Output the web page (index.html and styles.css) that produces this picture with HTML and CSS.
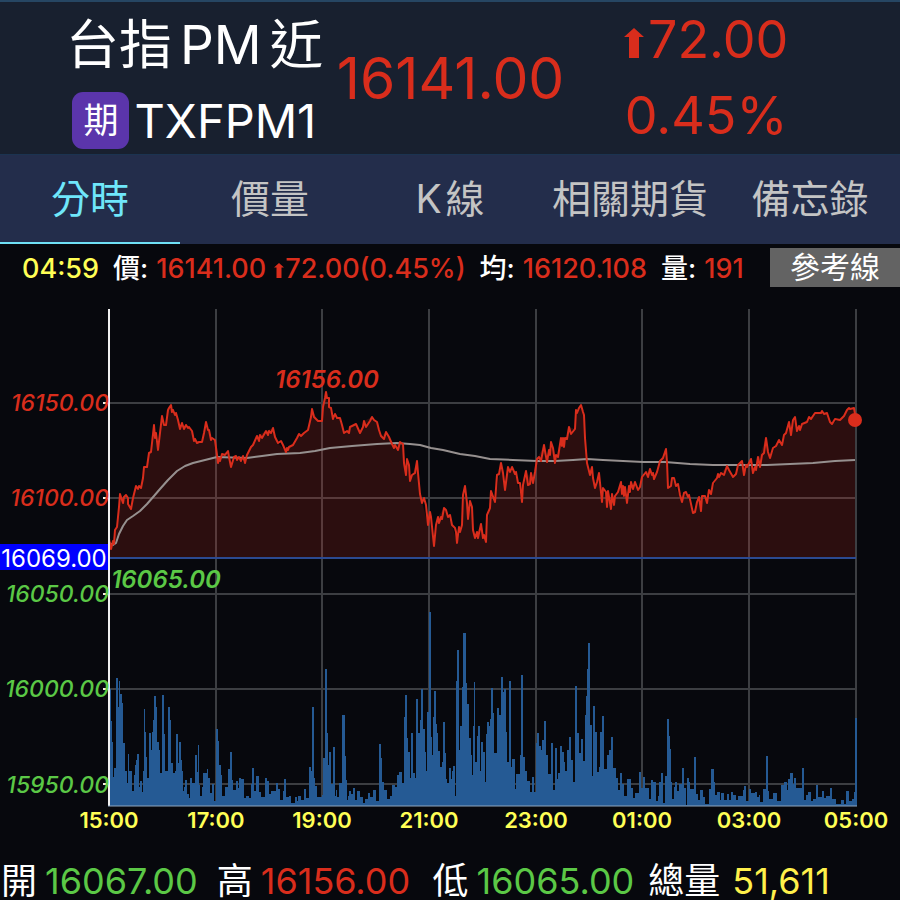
FILE: index.html
```html
<!DOCTYPE html>
<html lang="zh-Hant">
<head>
    <meta charset="UTF-8">
    <meta name="viewport" content="width=device-width, initial-scale=1.0">
    <title>台指PM近 TXFPM1</title>
    <link rel="stylesheet" href="styles.css">
</head>
<body>

<header class="quote">
    <div class="quote-name">
        <h1>台指<span class="latin">PM</span>近</h1>
        <div class="symbol"><span class="badge">期</span><span>TXFPM1</span></div>
    </div>
    <div class="quote-price up">16141.00</div>
    <div class="quote-change up">
        <div><svg class="arrow" viewBox="0 0 20 30"><path d="M10 0L20 9H15V30H5V9H0Z"/></svg>72.00</div>
        <div>0.45%</div>
    </div>
</header>

<nav class="tabs">
    <a href="#time" class="active">分時</a>
    <a href="#volume">價量</a>
    <a href="#kline"><span class="k">K</span>線</a>
    <a href="#related">相關期貨</a>
    <a href="#memo">備忘錄</a>
</nav>

<main>
    <div class="info">
        <span class="time">04:59</span>
        <span class="item"><span>價:</span><span class="up">16141.00</span><span class="up"><svg class="arrow" viewBox="0 0 20 30"><path d="M10 0L20 9H15V30H5V9H0Z"/></svg>72.00(0.45%)</span></span>
        <span class="item"><span>均:</span><span class="up">16120.108</span></span>
        <span class="item"><span>量:</span><span class="up">191</span></span>
        <button type="button">參考線</button>
    </div>

    <svg class="chart" viewBox="0 290 900 560">
        <!-- Grid -->
        <path class="grid" d="M216 309V806M322 309V806M429 309V806M536 309V806M642 309V806M749 309V806M856 309V806
            M109 403H856M109 498H856M109 594H856M109 689H856M109 784H856"/>

        <!-- Volume bars -->
        <path class="volume" d="M109 806V689H111V721H112V742H113V777H114V768H116V678H118V707H119V681H120V694H122V703H123V743H125V771H127V783H128V754H129V771H132V791H134V775H135V765H136V760H137V754H139V787H140V781H142V792H143V771H144V709H145V732H146V757H147V778H149V733H151V750H152V732H153V720H154V696H156V707H157V742H159V750H160V773H162V695H164V734H165V771H168V707H170V720H171V763H173V773H175V771H176V734H178V763H179V742H181V760H182V771H183V791H184V787H185V780H187V794H189V798H190V778H192V783H195V755H197V772H198V745H199V785H200V796H202V787H203V773H207V769H208V778H210V793H212V784H214V801H216V729H218V741H219V765H221V775H222V796H225V787H228V769H230V752H232V780H233V790H236V781H238V788H239V778H241V779H244V798H246V796H249V798H251V784H252V768H254V791H256V776H259V792H261V797H265V778H267V781H269V794H271V791H276V783H278V789H280V800H283V791H284V779H286V797H289V796H291V803H295V797H297V801H298V796H301V800H304V789H306V798H309V767H311V771H312V707H314V778H315V786H317V797H322V795H323V758H325V669H327V733H328V765H329V752H331V784H333V747H335V796H336V790H337V797H339V783H342V715H345V756H346V780H347V800H348V796H349V791H351V794H353V788H355V800H357V791H360V797H363V803H365V799H368V793H370V797H373V790H376V801H379V744H381V758H382V782H384V790H387V799H390V796H392V785H395V787H397V775H399V772H402V783H404V717H405V695H407V738H408V752H410V778H411V733H413V773H415V778H416V699H418V733H420V720H421V689H423V729H425V752H426V771H427V712H429V612H431V737H432V755H433V717H434V691H436V724H437V733H438V751H440V767H442V762H443V722H445V753H446V779H447V783H449V768H451V779H452V771H453V766H455V796H456V681H457V650H459V750H460V726H462V687H463V633H466V683H467V704H469V738H471V755H472V775H473V726H474V682H475V762H477V736H478V726H480V771H481V742H483V752H485V782H486V734H487V722H489V726H490V719H491V688H493V713H494V753H497V708H499V715H501V677H503V692H504V689H506V732H507V762H509V681H511V767H512V759H515V789H516V774H520V755H521V675H523V757H525V771H527V781H530V792H532V777H534V792H536V743H537V733H539V746H541V750H542V740H544V721H546V755H548V774H551V743H553V790H555V748H557V779H558V773H560V746H562V752H564V762H565V771H567V750H569V737H571V760H573V782H575V686H577V733H579V753H581V739H583V761H585V715H586V696H587V669H588V643H590V725H592V776H593V706H595V732H597V772H599V767H600V732H602V716H604V769H607V755H609V750H611V737H613V768H616V778H618V790H620V773H622V784H624V796H627V779H631V788H633V798H635V793H639V772H641V788H643V777H645V788H649V799H651V780H653V782H656V801H658V796H659V782H661V773H663V803H665V776H667V719H669V736H670V749H671V782H672V799H674V787H675V782H677V791H679V784H682V768H684V788H686V805H687V778H689V782H690V789H694V757H696V794H698V800H700V790H703V797H705V804H709V789H711V769H714V782H715V795H717V792H720V800H721V793H724V800H727V794H729V800H731V792H733V795H736V800H738V796H743V790H744V786H746V801H749V789H751V793H755V792H757V797H759V795H760V802H763V789H766V756H768V791H769V799H773V793H777V801H781V785H784V782H787V790H788V779H790V773H793V784H794V778H796V788H802V768H804V800H806V795H808V792H811V801H813V799H816V785H818V797H822V791H824V798H826V796H830V788H832V799H836V804H841V800H844V804H846V791H849V801H852V799H854V792H855V718H857V806Z"/>

        <!-- Price area, price line and average line -->
        <path class="area" d="M109 539L111 549 113 541 115 530 117 527 119 507 120 494 123 503 126 495 128 504 131 509 133 498 136 486 138 489 141 488 143 478 144 467 147 467 149 453 151 452 154 425 155 438 158 450 160 433 162 416 164 425 166 425 168 410 171 405 173 412 176 413 178 420 180 429 182 423 184 429 186 425 192 431 194 441 197 443 202 442 206 422 211 440 215 440 218 463 222 454 228 451 231 467 234 457 245 463 251 447 257 436 266 431 273 428 278 443 286 452 297 438 308 430 312 409 318 421 322 421 326 392 329 407 333 419 340 418 344 433 356 424 360 433 364 421 372 417 377 422 381 436 386 432 394 448 400 442 403 444 406 475 407 459 410 481 417 461 420 494 428 525 430 512 434 546 438 517 444 508 452 525 457 543 462 525 465 486 468 519 470 501 475 538 481 524 486 542 491 491 495 502 501 463 505 490 508 467 515 474 522 502 526 471 533 483 537 459 544 445 547 462 551 442 555 463 561 438 564 447 569 427 575 429 576 410 581 405 584 415 587 463 590 475 592 467 595 488 599 473 602 502 606 492 611 509 621 482 627 503 635 482 638 490 642 477 650 469 654 479 660 461 666 449 668 488 672 478 682 502 686 492 693 513 699 497 701 511 702 496 707 503 717 478 727 466 733 477 742 461 744 475 751 459 753 473 766 438 770 458 779 440 782 445 789 422 791 435 795 417 797 431 802 424 815 413 827 413 832 424 844 416 849 408 854 408 855 420V557H109Z"/>
        <path class="average" d="M109 543L113 545 116 543 119 534 123 526 127 520 133 516 140 511 147 504 154 496 160 489 168 480 177 471 185 466 193 463 205 460 217 457 247 458 262 456 277 454 300 453 315 451 330 448 352 446 377 444 397 443 410 444 420 445 431 448 443 450 460 454 475 456 490 459 513 460 537 461 555 461 573 460 587 459 603 460 623 461 643 462 665 462 690 464 713 465 740 465 767 465 790 464 813 463 835 461 855 460"/>
        <path class="price" d="M109 539L111 549 113 541 114 544 115 530 117 527 119 507 120 494 123 503 124 497 126 495 128 498 128 504 131 509 133 498 136 486 138 489 139 486 141 488 143 478 144 467 147 467 149 453 151 452 154 425 155 438 156 433 158 450 160 433 162 416 164 425 166 425 168 410 169 408 171 405 172 412 173 410 175 415 176 413 178 420 180 429 182 423 184 429 186 425 188 428 189 427 192 431 194 441 195 439 197 443 199 442 202 442 204 433 206 422 208 430 209 430 211 440 212 438 215 440 217 455 218 463 219 458 220 461 222 454 225 455 228 451 229 457 231 467 234 457 236 456 237 460 239 457 241 461 243 456 245 463 247 455 251 447 253 445 257 436 259 441 260 435 262 438 266 431 268 435 269 431 271 433 273 428 275 437 278 443 281 441 283 445 286 452 287 448 288 450 289 447 293 445 297 438 299 434 301 436 304 433 308 430 311 417 312 409 314 417 318 421 322 421 323 407 325 398 326 392 327 398 329 398 329 407 331 408 333 419 335 414 337 418 340 418 342 425 344 433 347 431 349 433 350 427 352 426 356 424 360 433 363 427 364 421 366 427 370 421 372 417 374 420 377 422 379 430 381 436 384 439 386 432 389 437 392 444 394 448 395 445 398 450 400 442 403 444 404 463 406 475 407 459 409 465 410 481 412 475 415 473 417 461 418 473 420 494 422 503 424 498 426 505 428 525 430 512 431 517 434 546 436 525 438 517 439 523 441 517 442 519 444 508 446 510 448 517 450 515 452 525 455 528 456 532 457 543 459 527 460 532 462 525 463 495 465 486 467 503 468 519 470 501 472 507 473 530 475 538 477 532 478 538 481 524 483 538 484 535 486 542 487 515 490 508 491 491 495 502 497 475 499 474 501 463 503 473 505 490 508 467 510 472 512 467 515 474 516 472 518 483 520 483 522 502 523 485 526 471 528 485 530 484 531 473 533 483 535 472 537 459 539 457 541 461 544 445 545 451 547 462 549 450 550 455 551 442 553 448 555 463 556 455 558 457 561 438 562 446 563 438 564 447 565 438 567 439 569 427 571 434 575 429 576 410 577 413 579 408 581 405 583 412 584 415 585 438 587 463 590 475 592 467 593 478 595 488 597 482 599 473 602 502 603 488 606 492 607 507 608 491 611 509 612 494 614 505 615 496 618 492 621 482 622 494 623 486 624 496 625 487 627 503 629 486 630 492 631 482 633 489 635 482 638 490 640 487 642 477 646 472 648 477 650 469 652 475 653 473 654 479 657 472 660 461 663 458 666 449 667 462 668 488 671 486 672 478 674 478 676 486 678 484 680 495 682 502 684 493 686 492 688 497 689 495 691 504 693 513 695 512 697 502 699 497 701 511 702 496 705 496 707 503 709 490 711 494 713 483 717 478 718 474 719 477 721 473 724 475 727 466 729 470 733 477 736 474 738 465 742 461 744 475 746 465 747 467 751 459 753 473 755 467 756 470 758 457 760 467 762 455 764 453 766 438 768 452 770 458 773 448 776 446 779 440 782 445 784 435 786 433 789 422 791 435 793 420 795 417 797 431 799 426 800 430 802 424 807 422 809 417 811 419 815 413 821 413 822 411 824 414 827 413 830 422 832 424 835 419 840 420 844 416 847 410 849 408 850 409 854 408 855 414"/>
        <path class="prev-close" d="M109 558H856"/>
        <circle class="dot" cx="855" cy="420" r="7"/>

        <!-- Axes -->
        <path class="axis" d="M109 309V806"/>
        <path class="axis" d="M103 403H109M103 498H109M103 594H109M103 689H109M103 784H109"/>
        <path class="axis-bottom" d="M108 806H857"/>

        <g class="label y-label">
            <text class="up" x="109" y="411">16150.00</text>
            <text class="up" x="109" y="506">16100.00</text>
            <text class="down" x="109" y="602">16050.00</text>
            <text class="down" x="109" y="697">16000.00</text>
            <text class="down" x="109" y="793">15950.00</text>
        </g>
        <rect class="prev-box" x="0" y="544" width="108" height="26"/>
        <text class="prev-text" x="54" y="567">16069.00</text>
        <text class="label mark up" x="327" y="388">16156.00</text>
        <text class="label mark down" x="166" y="588">16065.00</text>

        <g class="label x-label">
            <text x="109" y="828">15:00</text>
            <text x="216" y="828">17:00</text>
            <text x="322" y="828">19:00</text>
            <text x="429" y="828">21:00</text>
            <text x="536" y="828">23:00</text>
            <text x="642" y="828">01:00</text>
            <text x="749" y="828">03:00</text>
            <text x="856" y="828">05:00</text>
        </g>
    </svg>
</main>

<footer class="summary">
    <div><span>開</span><span class="down">16067.00</span></div>
    <div><span>高</span><span class="up">16156.00</span></div>
    <div><span>低</span><span class="down">16065.00</span></div>
    <div><span>總量</span><span class="total">51,611</span></div>
</footer>

</body>
</html>
```

FILE: styles.css
```css
* {
    box-sizing: border-box;
}
body {
    margin: 0;
    background-color: #07080d;
    color: #ffffff;
    font-family: Inter, "Noto Sans CJK TC", sans-serif;
}
.up {
    color: #d92d1c;
    fill: #d92d1c;
}
.down {
    color: #5bc846;
    fill: #5bc846;
}

/* Quote header */
.quote {
    display: grid;
    grid-template-columns: 1fr 1fr 1fr;
    align-items: center;
    height: 155px;
    padding: 0 66px;
    background-color: #18202f;
    border-top: 2px solid #264663;
    border-bottom: 1px solid #1b3350;
    text-align: center;
    white-space: nowrap;
}
.quote > div {
    display: flex;
    flex-direction: column;
    align-items: center;
}
.quote h1 {
    margin: 0;
    font-size: 53px;
    font-weight: 400;
    line-height: 84px;
}
.latin {
    margin: 0 8px;
}
.symbol {
    display: flex;
    align-items: center;
    gap: 5px;
    height: 66px;
    font-size: 47px;
}
.badge {
    width: 57px;
    height: 57px;
    border-radius: 11px;
    background-color: #5b35ab;
    font-size: 35px;
    line-height: 57px;
}
.quote-price {
    font-size: 57px;
}
.quote-change {
    font-size: 52px;
    line-height: 76px;
}
.arrow {
    width: 20px;
    height: 30px;
    margin-right: 4px;
    fill: currentColor;
}

/* Tabs */
.tabs {
    display: grid;
    grid-template-columns: repeat(5, 1fr);
    height: 89px;
    background-color: #232d4b;
}
.tabs a {
    border-bottom: 2px solid transparent;
    color: #c4c4c4;
    font-size: 39px;
    line-height: 87px;
    text-align: center;
    text-decoration: none;
    white-space: nowrap;
}
.tabs .k {
    margin-right: 4px;
}
.tabs .active {
    border-color: #6fe0f5;
    color: #6fe6fa;
}

/* Info bar */
.info {
    display: flex;
    align-items: baseline;
    gap: 14px;
    height: 46px;
    padding: 4px 0 0 22px;
    font-size: 27px;
    font-weight: 500;
    line-height: 39px;
    white-space: nowrap;
}
.info .item {
    display: flex;
    align-items: baseline;
    gap: 8px;
}
.info .arrow {
    width: 10px;
    height: 15px;
    margin-right: 1px;
}
.time {
    color: #ffff55;
}
.info button {
    width: 130px;
    height: 39px;
    margin-left: auto;
    padding: 0;
    border: none;
    background-color: #636363;
    color: #ffffff;
    font: 30px/39px Inter, "Noto Sans CJK TC", sans-serif;
}

/* Chart */
.chart {
    display: block;
    width: 100%;
}
.chart path {
    fill: none;
}
.chart .grid {
    stroke: #3c3e42;
    stroke-width: 2;
}
.chart .volume {
    fill: #255a94;
}
.chart .area {
    fill: #d92d1c;
    fill-opacity: 0.18;
}
.chart .average {
    stroke: #96908f;
    stroke-width: 2;
    stroke-linejoin: round;
}
.chart .price {
    stroke: #d92d1c;
    stroke-width: 2;
    stroke-linejoin: round;
}
.chart .prev-close {
    stroke: #2b4a92;
    stroke-width: 2;
}
.dot {
    fill: #d92d1c;
}
.chart .axis {
    stroke: #f0f0f0;
    stroke-width: 2;
}
.chart .axis-bottom {
    stroke: #8fa6c0;
    stroke-width: 1;
}
.label {
    font-size: 23px;
    font-weight: 600;
}
.y-label {
    font-style: italic;
    font-weight: 500;
    text-anchor: end;
}
.mark {
    font-size: 24px;
    font-style: italic;
    text-anchor: middle;
}
.x-label {
    font-size: 22px;
    fill: #ffff55;
    text-anchor: middle;
}
.prev-box {
    fill: #0000ff;
}
.prev-text {
    fill: #ffffff;
    font-size: 24px;
    text-anchor: middle;
}

/* Summary */
.summary {
    display: grid;
    grid-template-columns: 6fr 6fr 6fr 7fr;
    padding: 12px 0 0 1px;
    font-size: 36px;
    line-height: 38px;
    white-space: nowrap;
}
.summary div {
    display: flex;
    gap: 8px;
}
.summary .total {
    margin-left: 4px;
    color: #fff04b;
}
```
